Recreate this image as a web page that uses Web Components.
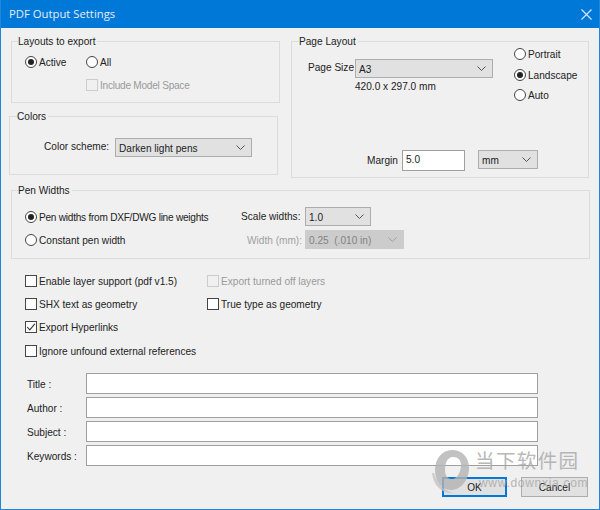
<!DOCTYPE html>
<html><head><meta charset="utf-8">
<style>
html,body{margin:0;padding:0;background:#f0f0f0}
body{font:10.1px "Liberation Sans",sans-serif;color:#222}
</style></head><body>
<pdf-dialog>
  <dialog-title slot="title">PDF Output Settings</dialog-title>

  <div style="display:flex;align-items:flex-start">
    <div style="width:271px;display:flex;flex-direction:column">
      <form-group label="Layouts to export" style="height:69px;margin:0 0 0 2px;--lx:6px">
        <div style="display:grid;grid-template-columns:61px auto;row-gap:9px;padding:7px 0 0 13px">
          <form-radio checked>Active</form-radio>
          <form-radio>All</form-radio>
          <span></span>
          <form-check disabled style="letter-spacing:-.25px">Include Model Space</form-check>
        </div>
      </form-group>
      <form-group label="Colors" style="height:66px;margin:6px 2px 0 0;--lx:7px">
        <div style="display:flex;align-items:center;padding:15px 0 0 34px">
          <span style="width:71px;flex:none;margin-top:-3px">Color scheme:</span>
          <form-select w="137">Darken light pens</form-select>
        </div>
      </form-group>
    </div>
    <form-group label="Page Layout" style="width:298px;height:144px;margin-left:11px;--lx:7px">
      <page-layout-body></page-layout-body>
    </form-group>
  </div>

  <form-group label="Pen Widths" style="height:76px;margin:5px 9px 0 2px;--lx:6px">
    <div style="display:grid;grid-template-columns:216px 64px auto;align-items:center;row-gap:4px;padding:10px 0 0 13px">
      <form-radio checked style="letter-spacing:-.25px">Pen widths from DXF/DWG line weights</form-radio>
      <span style="white-space:nowrap">Scale widths:</span>
      <form-select w="66">1.0</form-select>
      <form-radio>Constant pen width</form-radio>
      <span style="color:#a0a0a0;justify-self:end;margin:2px 3px 0 0;white-space:nowrap">Width (mm):</span>
      <form-select w="99" disabled>0.25&nbsp; (.010 in)</form-select>
    </div>
  </form-group>

  <div style="display:grid;grid-template-columns:182px auto;grid-auto-rows:23.4px;align-items:center;margin:10px 0 0 16px">
    <form-check>Enable layer support (pdf v1.5)</form-check>
    <form-check disabled>Export turned off layers</form-check>
    <form-check>SHX text as geometry</form-check>
    <form-check>True type as geometry</form-check>
    <form-check checked>Export Hyperlinks</form-check>
    <span></span>
    <form-check>Ignore unfound external references</form-check>
  </div>

  <div style="display:flex;flex-direction:column;gap:3px;margin:10px 0 0 18px">
    <form-field>Title :</form-field>
    <form-field>Author :</form-field>
    <form-field>Subject :</form-field>
    <form-field>Keywords :</form-field>
  </div>

  <div style="display:flex;justify-content:flex-end;gap:14px;margin:11px 11px 0 0">
    <form-button default style="--w:65px">OK</form-button>
    <form-button style="--w:67px">Cancel</form-button>
  </div>

  <site-watermark slot="overlay"></site-watermark>
</pdf-dialog>

<script>
function def(name, css, html){
  customElements.define(name, class extends HTMLElement{
    connectedCallback(){
      if(this.shadowRoot) return;
      const r=this.attachShadow({mode:'open'});
      r.innerHTML='<style>'+css+'</style>'+(typeof html==='function'?html(this):html);
    }
  });
}
def('pdf-dialog',`
  :host{display:block;position:relative;width:600px;height:510px;box-sizing:border-box;background:#f0f0f0;
    border:1px solid #1e86dc;border-top:0;overflow:hidden}
  main{padding:6px 0 0 8px}
`,`<slot name="title"></slot><main><slot></slot></main><slot name="overlay"></slot>`);
def('dialog-title',`
  :host{display:flex;align-items:center;justify-content:space-between;height:28px;margin:0 -1px;
    background:#0078d7;color:#e4eefa;font:11.3px "Open Sans","Noto Sans",sans-serif;padding:0 8px 0 9px}
  slot{display:block;margin-bottom:2px}
  svg{display:block}
`,`<slot></slot><svg width="11" height="11" viewBox="0 0 11 11" fill="none" stroke="#dcebfa" stroke-width="1.1"><path d="M.5.5l10 10M10.5.5l-10 10"/></svg>`);
def('form-group',`
  :host{display:block;box-sizing:border-box}
  fieldset{margin:0;height:100%;box-sizing:border-box;border:1px solid #dcdcdc;padding:0;min-width:0}
  legend{padding:0 2px 0 0;margin-left:var(--lx,6px);line-height:14px}
  legend span{display:block;transform:translateY(1px)}
`,el=>`<fieldset><legend><span>${el.getAttribute('label')}</span></legend><slot></slot></fieldset>`);
def('form-radio',`
  :host{display:inline-flex;align-items:center;gap:2px;white-space:nowrap;line-height:14px}
  slot{display:block;margin:1px 0 -1px}
  svg{display:block;flex:none}
`,el=>`<svg width="12" height="12" viewBox="0 0 12 12"><circle cx="6" cy="6" r="5.5" fill="#fff" stroke="#444"/>${el.hasAttribute('checked')?'<circle cx="6" cy="6" r="3" fill="#222"/>':''}</svg><slot></slot>`);
def('form-check',`
  :host{display:inline-flex;align-items:center;gap:2px;white-space:nowrap;line-height:14px}
  :host([disabled]){color:#9a9a9a}
  slot{display:block;margin:1px 0 -1px}
  svg{display:block;flex:none}
`,el=>{const d=el.hasAttribute('disabled');return `<svg width="12" height="12" viewBox="0 0 12 12"><rect x=".5" y=".5" width="11" height="11" fill="${d?'#f0f0f0':'#fff'}" stroke="${d?'#ccc':'#444'}"/>${el.hasAttribute('checked')?'<path d="M2.2 6l2.6 2.8L9.8 2.8" fill="none" stroke="#333" stroke-width="1.1"/>':''}</svg><slot></slot>`});
def('form-select',`
  :host{display:inline-flex;flex:none;align-items:center;justify-content:space-between;box-sizing:border-box;height:19px;
    background:#e1e1e1;border:1px solid #adadad;padding:0 6px 0 3px;white-space:nowrap;line-height:14px}
  :host([disabled]){background:#ccc;border-color:#ccc;color:#838383}
  slot{display:block;margin:1px 0 -1px}
  svg{display:block;flex:none}
`,el=>{el.style.width=el.getAttribute('w')+'px';const d=el.hasAttribute('disabled');return `<slot></slot><svg width="9" height="5" viewBox="0 0 9 5" fill="none" stroke="${d?'#a0a0a0':'#555'}"><path d="M.5.5l4 4 4-4"/></svg>`});
def('form-input',`
  :host{display:block;flex:none;box-sizing:border-box;background:#fff;border:1px solid #a0a0a0;height:21px;padding:0 3px;line-height:17px}
`,`<slot></slot>`);
def('form-field',`
  :host{display:flex;align-items:center}
  span{width:59px;flex:none;white-space:nowrap;margin-top:2px}
  form-input{width:452px}
`,`<span><slot></slot></span><form-input></form-input>`);
def('form-button',`
  :host{display:flex;align-items:center;justify-content:center;box-sizing:border-box;width:var(--w);height:20px;
    background:#e1e1e1;border:1px solid #adadad;padding-top:2px}
  :host([default]){border:2px solid #0078d7}
`,`<slot></slot>`);
def('page-layout-body',`
  :host{display:grid;grid-template-columns:222px auto;height:122px}
  .l{padding:11px 0 0 16px;min-width:0}
  .size{display:grid;grid-template-columns:47px auto;align-items:center;row-gap:2px;white-space:nowrap;line-height:14px}
  .size>span:first-child{margin-top:-1px}
  .m{display:flex;align-items:flex-start;margin-top:56px;margin-left:59px;white-space:nowrap}
  .m span{width:35px;flex:none;line-height:22px}
  .r{display:flex;flex-direction:column;gap:6.5px;margin-top:-1px;align-items:flex-start}
  form-input{width:63px;margin-right:13px}
`,`<div class="l"><div class="size"><span>Page Size</span><form-select w="138">A3</form-select><span></span><span>420.0 x 297.0 mm</span></div>
  <div class="m"><span>Margin</span><form-input>5.0</form-input><form-select w="60">mm</form-select></div></div>
  <div class="r"><form-radio>Portrait</form-radio><form-radio checked>Landscape</form-radio><form-radio>Auto</form-radio></div>`);
def('site-watermark',`
  :host{position:absolute;left:427px;top:448px;width:172px;height:62px;pointer-events:none;display:block;opacity:.8}
  .logo{position:absolute;left:3px;top:0}
  .cn{position:absolute;left:47px;top:0;font:19.5px/24px "Noto Sans CJK SC",sans-serif;letter-spacing:1.4px;white-space:nowrap;color:#a8a8a8}
  .url{position:absolute;left:51px;top:28px;font:12px/14px "Liberation Sans",sans-serif;letter-spacing:.7px;white-space:nowrap;color:#a8a8a8}
`,`<svg class="logo" width="44" height="50" viewBox="0 0 44 50"><path fill="#b4b4b4" fill-rule="evenodd" d="M21 2C31 2 38 9 38 20C38 32 30 42 20 42C10 42 4 33 4 22C4 11 11 2 21 2ZM22 9C16 9 14 16 14 22C14 28 17 31 21 31C26 31 30 24 30 17C30 12 27 9 22 9Z"/><path fill="#c4c4c4" d="M1 25C2 36 10 46 22 45C14 43 6 36 3 25Z"/></svg>
<div class="cn">当下软件园</div><div class="url">www.downxia.com</div>`);
</script>
</body></html>
